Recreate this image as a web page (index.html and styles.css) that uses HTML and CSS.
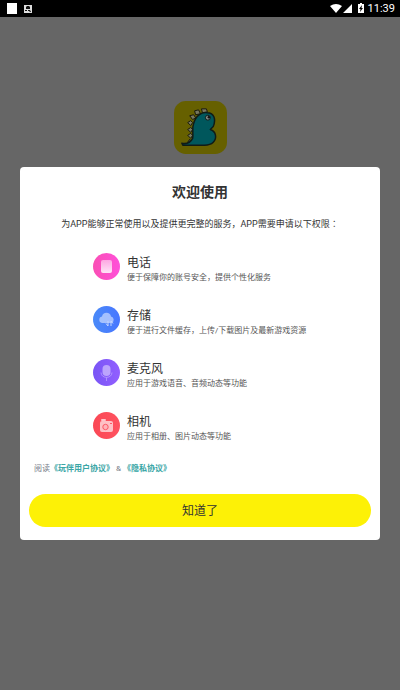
FILE: index.html
```html
<!DOCTYPE html>
<html lang="zh-CN">
<head>
<meta charset="utf-8">
<meta name="viewport" content="width=device-width, initial-scale=1">
<title>欢迎使用</title>
<link rel="stylesheet" href="styles.css">
</head>
<body>
<header class="status">
  <svg class="status-left" width="34" height="17" viewBox="0 0 34 17" aria-hidden="true">
    <path fill="#fff" d="M7 3h10v11H7z"/>
    <path fill="#ddd" d="M24 5h8v8h-8z"/>
    <path fill="#111" d="M27 6h2l1 1v2h-4V7zM25 10h2v1h-2zM28 10h2l1 2h-1l-1-1h-1z"/>
  </svg>
  <div class="status-right">
    <svg width="36" height="17" viewBox="0 0 36 17" aria-hidden="true">
      <path fill="#fff" d="M1 6q6-4 12 0l-6 7zM23 4v9h-9zM29 4h2V3h2v1h2v9h-6z"/>
      <path fill="#000" d="M33 5l-3 4h1.500L31 12l3-4h-1.500z"/>
    </svg>
    <span class="clock">11:39</span>
  </div>
</header>
<main class="screen">
  <svg class="logo" width="53" height="53" viewBox="0 0 54 54" role="img" aria-label="应用图标">
    <rect width="54" height="54" rx="12" fill="#666000"/>
    <g fill="#77775f" stroke="#17170b" stroke-width="1">
      <path d="M29 12l-1-4 5 0 1 3zM22 14l-1-4 4-1 2 4zM19 19l-3-4 4-1 2 3zM17 25l-3-3 3-2 2 2zM17 32l-3-3 3-2 2 2zM17 38l-3-3 3-2 2 2zM17 42l-3 0 2-3z"/>
    </g>
    <path d="M8 43c6 1 9-1 11-5 1-5-1-10 1-15 2-8 8-12 14-11 7 0 9 7 6 14l-3 3c6 2 7 9 3 13-2 2-5 3-9 3H9z" fill="#00575c" stroke="#101b17" stroke-width="1.500" stroke-linejoin="round"/>
    <circle cx="34.500" cy="17" r="2.500" fill="#85908b" stroke="#101b17"/>
    <circle cx="35.500" cy="16.500" r="1.300" fill="#111"/>
  </svg>
  <section class="dialog" role="dialog" aria-labelledby="title">
    <h1 class="title" id="title">欢迎使用</h1>
    <p class="intro">为APP能够正常使用以及提供更完整的服务，APP需要申请以下权限<span class="colon" lang="zh-TW">：</span></p>
    <ul class="permissions">
      <li class="permission">
        <svg class="icon" viewBox="0 0 27 27" aria-hidden="true">
          <defs>
            <linearGradient id="pink"><stop stop-color="#fa4fb4"/><stop offset="1" stop-color="#ff50da"/></linearGradient>
            <linearGradient id="shine" x1="0" y1="0" x2="0" y2="1"><stop stop-color="#fff" stop-opacity=".5"/><stop offset="1" stop-color="#fff" stop-opacity=".85"/></linearGradient>
          </defs>
          <circle cx="13.500" cy="13.500" r="13.500" fill="url(#pink)"/>
          <rect x="8" y="7" width="11" height="13" rx="2" fill="url(#shine)"/>
        </svg>
        <div><h2 class="name">电话</h2><p class="detail">便于保障你的账号安全，提供个性化服务</p></div>
      </li>
      <li class="permission">
        <svg class="icon" viewBox="0 0 27 27" aria-hidden="true">
          <defs><linearGradient id="blue"><stop stop-color="#4a8af8"/><stop offset="1" stop-color="#4876ff"/></linearGradient></defs>
          <circle cx="13.500" cy="13.500" r="13.500" fill="url(#blue)"/>
          <path d="M9 17a3.300 3.300 0 0 1 0-6.500 4.600 4.600 0 0 1 9 0 3.400 3.400 0 0 1 .5 6.500z" fill="#fff" opacity=".5"/>
          <path d="M15 15v5M13 17.500l2 2.500M18 20v-5M20 17.500L18 15" fill="none" stroke="#c4d6ff"/>
        </svg>
        <div><h2 class="name">存储</h2><p class="detail">便于进行文件缓存，上传/下载图片及最新游戏资源</p></div>
      </li>
      <li class="permission">
        <svg class="icon" viewBox="0 0 27 27" aria-hidden="true">
          <defs><linearGradient id="violet"><stop stop-color="#7955f5"/><stop offset="1" stop-color="#925fff"/></linearGradient></defs>
          <circle cx="13.500" cy="13.500" r="13.500" fill="url(#violet)"/>
          <rect x="9.500" y="6" width="8" height="11" rx="4" fill="#fff" opacity=".45"/>
          <path d="M8 13.500c0 6.500 11 6.500 11 0M13.500 18.500V22" fill="none" stroke="#c9b5ff" stroke-width="1" opacity=".6"/>
        </svg>
        <div><h2 class="name">麦克风</h2><p class="detail">应用于游戏语音、音频动态等功能</p></div>
      </li>
      <li class="permission">
        <svg class="icon" viewBox="0 0 27 27" aria-hidden="true">
          <defs><linearGradient id="red"><stop stop-color="#fa4855"/><stop offset="1" stop-color="#ff5360"/></linearGradient></defs>
          <circle cx="13.500" cy="13.500" r="13.500" fill="url(#red)"/>
          <rect x="8" y="7" width="5" height="2" rx="1" fill="#ffc5ca"/>
          <rect x="7" y="9" width="13" height="11" rx="2" fill="#fff" opacity=".65"/>
          <circle cx="12.500" cy="15" r="2.700" fill="#ffb3b9" stroke="#fb5966"/>
          <path d="M17 11.500h2" stroke="#fb5966"/>
        </svg>
        <div><h2 class="name">相机</h2><p class="detail">应用于相册、图片动态等功能</p></div>
      </li>
    </ul>
    <p class="terms">阅读<a href="#user">《玩伴用户协议》</a> &amp; <a href="#privacy">《隐私协议》</a></p>
    <button class="confirm" type="button">知道了</button>
  </section>
</main>
</body>
</html>
```
FILE: styles.css
```css
* { box-sizing: border-box; }
body, h1, h2, p, ul { margin: 0; padding: 0; }
body {
  min-height: 100vh;
  display: flex;
  flex-direction: column;
  background: #666;
  color: #333;
  font-family: Roboto, "Noto Sans CJK SC", sans-serif;
}
.status {
  height: 17px;
  display: flex;
  justify-content: space-between;
  padding-right: 5px;
  background: #000;
  color: #fff;
}
.status-right { display: flex; gap: 3px; }
.clock { font-size: 11px; line-height: 18px; font-weight: 400; }
.screen {
  flex: 1;
  display: flex;
  flex-direction: column;
  align-items: center;
  padding: 84px 20px 20px;
}
.logo { display: block; margin-bottom: 13px; }
.dialog {
  width: 100%;
  display: flex;
  flex-direction: column;
  padding: 14px 9px 13px;
  border-radius: 4px;
  background: #fff;
}
.title { font-size: 14px; line-height: 22px; font-weight: 700; text-align: center; }
.intro { margin-top: 12px; font-size: 9px; line-height: 18px; font-weight: 400; text-align: center; }
.colon { font-family: "Noto Sans CJK TC", sans-serif; }
.permissions {
  display: flex;
  flex-direction: column;
  gap: 21px;
  margin-top: 19px;
  padding-left: 64px;
  list-style: none;
}
.permission { display: flex; align-items: flex-start; gap: 7px; }
.icon { width: 27px; height: 27px; flex: none; margin-top: 1px; }
.name { padding-top: 2px; font-size: 12px; line-height: 18px; font-weight: 400; }
.detail { font-size: 8px; line-height: 12px; color: #555; }
.terms { margin-top: 18px; padding-left: 5px; font-size: 8px; line-height: 16px; color: #777d88; }
.terms a { color: #3aa6a6; font-weight: 700; text-decoration: none; }
.confirm {
  height: 33px;
  margin-top: 17px;
  border: 0;
  border-radius: 17px;
  background: #fdf106;
  color: #333;
  font: 400 12px/18px Roboto, "Noto Sans CJK SC", sans-serif;
}
```
